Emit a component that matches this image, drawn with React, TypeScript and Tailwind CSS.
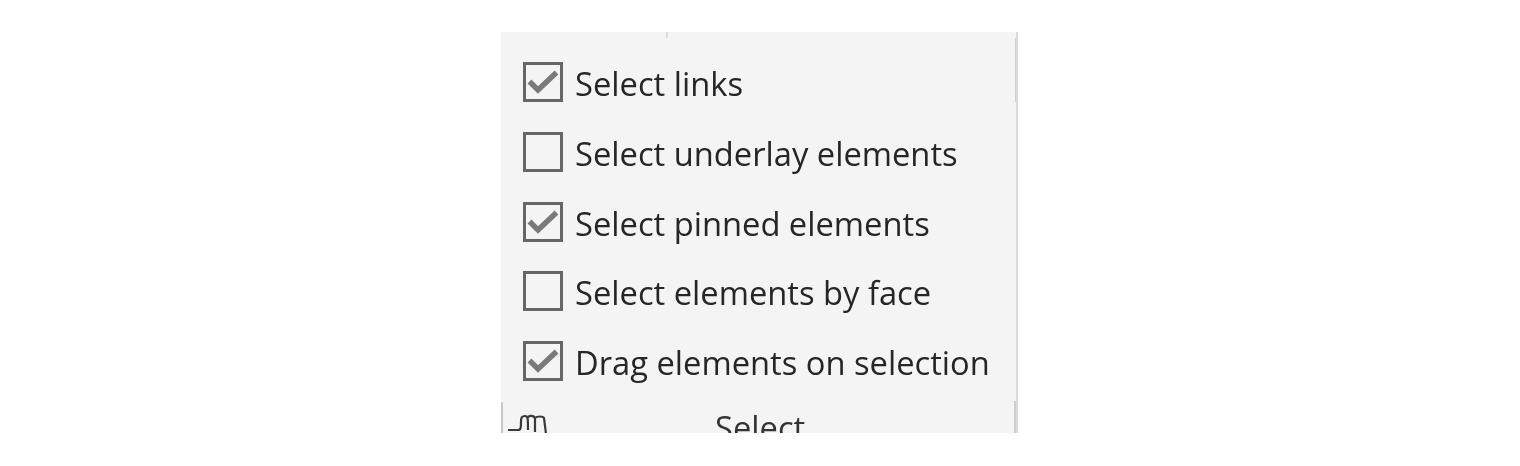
import React from 'react';

const options = [
  { label: 'Select links', checked: true },
  { label: 'Select underlay elements', checked: false },
  { label: 'Select pinned elements', checked: true },
  { label: 'Select elements by face', checked: false },
  { label: 'Drag elements on selection', checked: true },
];

function Check() {
  return (
    <svg className="w-[40px] h-[40px]" viewBox="0 0 40 40" fill="none">
      <path d="M6.5 19.5L15 28L33.5 10.5" stroke="#7a7a7a" strokeWidth="5.5" />
    </svg>
  );
}

export default function App() {
  return (
    <div className="w-[1520px] h-[466px] bg-white pt-[32px] pl-[501px] overflow-hidden">
      <div className="relative w-[517px] h-[401px] bg-[#f4f4f4] border-r-[2px] border-[#dcdcdc] overflow-hidden flex flex-col text-[#262626] font-['Open_Sans','Noto_Sans',sans-serif] blur-[0.6px]">
        {/* little marks on the panel edges */}
        <div className="absolute top-0 left-[165px] w-[2px] h-[6px] bg-[#dddddd]" />
        <div className="absolute top-[6px] right-[-2px] w-[3px] h-[64px] bg-[#cfcfcf]" />
        <div className="absolute bottom-0 right-[-2px] w-[4px] h-[32px] bg-[#cfcfcf]" />

        <div className="flex flex-col gap-[29.75px] pt-[30px] pl-[22px]">
          {options.map((o) => (
            <div key={o.label} className="flex items-center gap-[12px] h-[40px]">
              <div className="w-[40px] h-[40px] border-[3px] border-[#666666] flex items-center justify-center shrink-0">
                {o.checked && <div className="shrink-0"><Check /></div>}
              </div>
              <span className="text-[32.7px] leading-[40px] pt-[4px] whitespace-nowrap">{o.label}</span>
            </div>
          ))}
        </div>
        <div className="flex mt-[21px] h-[40px] border-l-[2px] border-[#c8c8c8]">
          <svg className="w-[44px] h-[24px] ml-[4px] mt-[12px] shrink-0" viewBox="0 0 44 24" fill="none" stroke="#3a3a3a" strokeWidth="2.2">
            <path d="M1 16H11C14 16 14 13 14 8C14 3 15 2 18 2C21 2 21 4 21 16M21 3C24 1 28 2 28 5V18M28 4C30 2 36 2 37 4L39 20" />
          </svg>
          <span className="ml-[164px] text-[32.7px] leading-[40px] mt-[6px] text-[#333333]">Select</span>
        </div>
      </div>
    </div>
  );
}
